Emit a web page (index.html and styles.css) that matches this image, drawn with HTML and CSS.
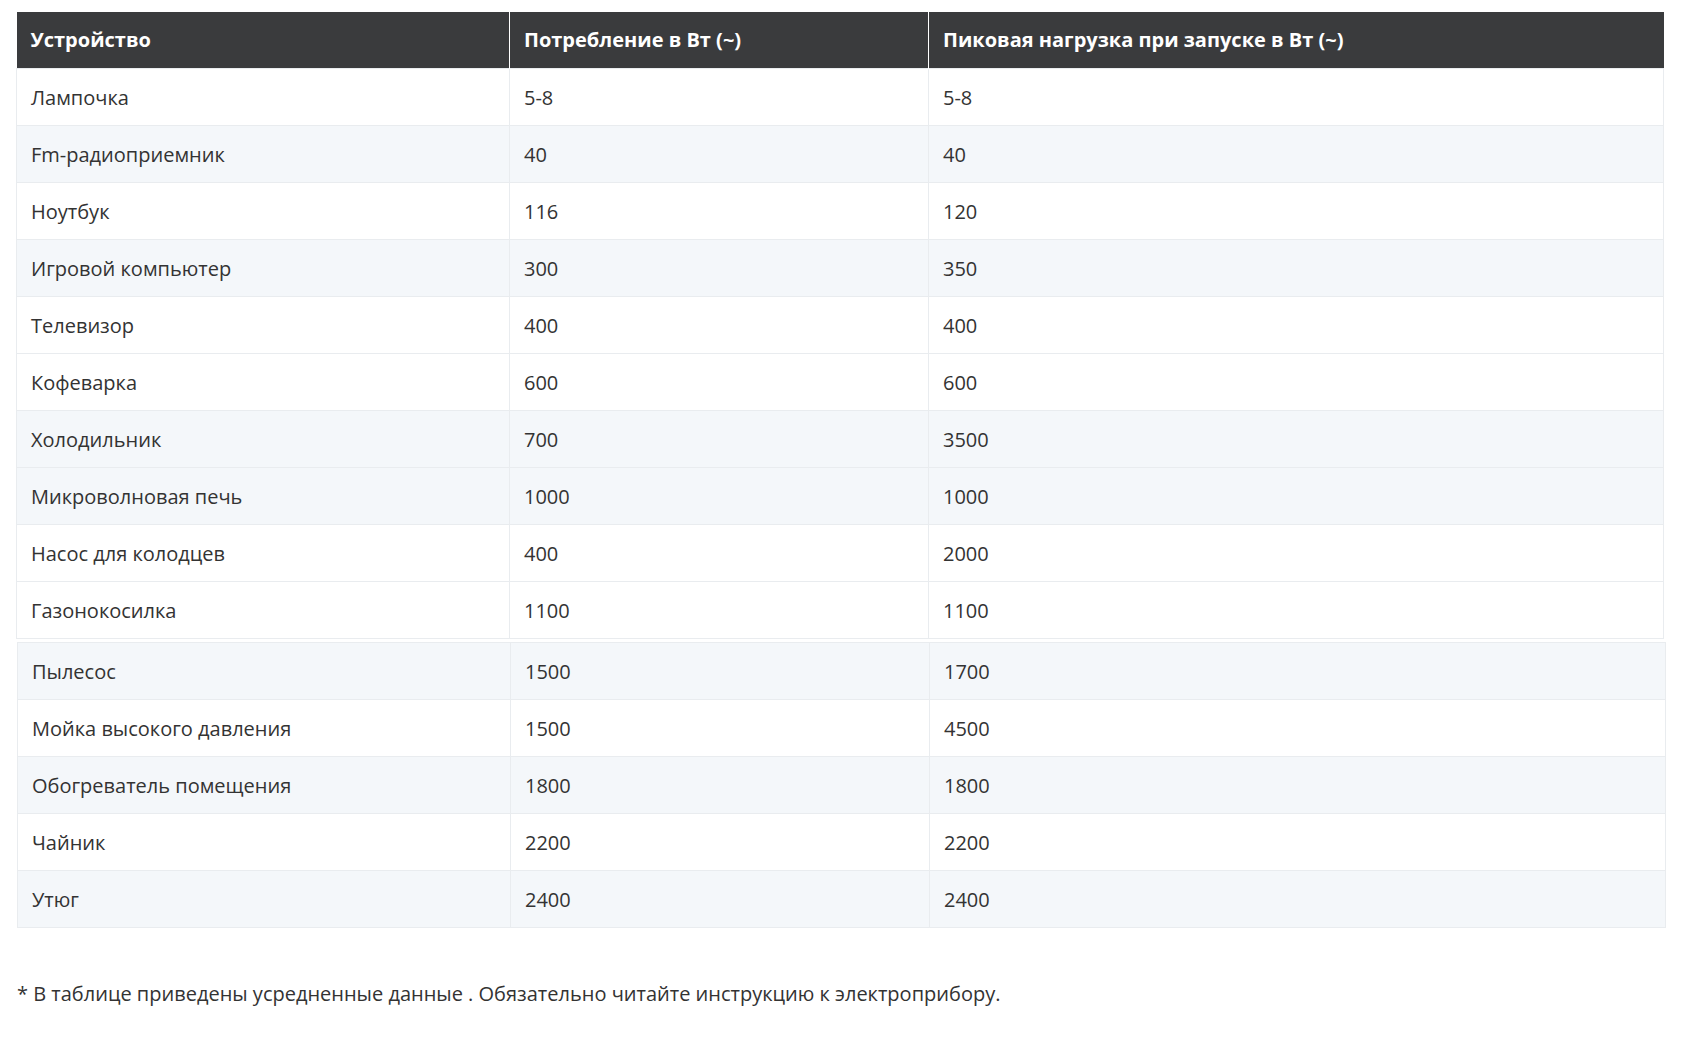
FILE: index.html
```html
<!DOCTYPE html>
<html lang="ru">
<head>
<meta charset="utf-8">
<title>Потребление электроприборов</title>
<link rel="stylesheet" href="styles.css">
</head>
<body>
<div class="page">
  <table class="power power-main">
    <colgroup><col class="c1"><col class="c2"><col class="c3"></colgroup>
    <thead>
      <tr><th>Устройство</th><th>Потребление в Вт (~)</th><th>Пиковая нагрузка при запуске в Вт (~)</th></tr>
    </thead>
    <tbody>
      <tr><td>Лампочка</td><td>5-8</td><td>5-8</td></tr>
      <tr class="alt"><td>Fm-радиоприемник</td><td>40</td><td>40</td></tr>
      <tr><td>Ноутбук</td><td>116</td><td>120</td></tr>
      <tr class="alt"><td>Игровой компьютер</td><td>300</td><td>350</td></tr>
      <tr><td>Телевизор</td><td>400</td><td>400</td></tr>
      <tr><td>Кофеварка</td><td>600</td><td>600</td></tr>
      <tr class="alt"><td>Холодильник</td><td>700</td><td>3500</td></tr>
      <tr class="alt"><td>Микроволновая печь</td><td>1000</td><td>1000</td></tr>
      <tr><td>Насос для колодцев</td><td>400</td><td>2000</td></tr>
      <tr><td>Газонокосилка</td><td>1100</td><td>1100</td></tr>
    </tbody>
  </table>
  <table class="power power-extra">
    <colgroup><col class="c1"><col class="c2"><col class="c3"></colgroup>
    <tbody>
      <tr class="alt"><td>Пылесос</td><td>1500</td><td>1700</td></tr>
      <tr><td>Мойка высокого давления</td><td>1500</td><td>4500</td></tr>
      <tr class="alt"><td>Обогреватель помещения</td><td>1800</td><td>1800</td></tr>
      <tr><td>Чайник</td><td>2200</td><td>2200</td></tr>
      <tr class="alt"><td>Утюг</td><td>2400</td><td>2400</td></tr>
    </tbody>
  </table>
  <p class="note">* В таблице приведены усредненные данные . Обязательно читайте инструкцию к электроприбору.</p>
</div>
</body>
</html>
```

FILE: styles.css
```css
html, body {
  margin: 0;
  padding: 0;
  background: #ffffff;
}

body {
  font-family: "Open Sans", "Noto Sans", sans-serif;
  color: #333333;
}

.page {
  padding: 12px 0 0 16px;
}

.power {
  border-collapse: collapse;
  table-layout: fixed;
  width: 1648px;
  font-size: 20px;
}

.power-extra {
  margin: 3px 0 0 1px;
  width: 1649px;
}

.power .c1 { width: 493px; }
.power .c2 { width: 419px; }

.power th {
  background: #3a3b3d;
  color: #ffffff;
  font-weight: 700;
  text-align: left;
  height: 56px;
  padding: 0 14px;
  border-left: 1px solid #ffffff;
  box-sizing: border-box;
}

.power th:first-child {
  border-left: none;
}

.power td {
  height: 57px;
  padding: 2px 14px 0;
  border: 1px solid #e9ecef;
  box-sizing: border-box;
  vertical-align: middle;
}

.power tr.alt td {
  background: #f4f7fa;
}

.note {
  margin: 52px 0 0 1px;
  font-size: 20px;
  color: #333333;
}
```
